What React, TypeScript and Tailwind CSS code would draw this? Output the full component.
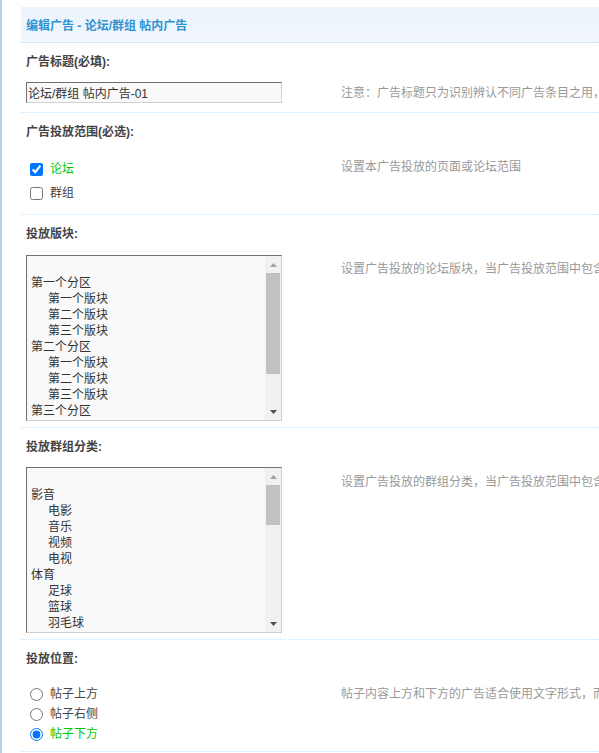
import type { ReactNode } from "react";

const FONT = "font-['Liberation_Sans','Noto_Sans_CJK_SC',sans-serif]";

type Opt = { text: string; child?: boolean };

const FORUMS: Opt[] = [
  { text: "" },
  { text: "第一个分区" },
  { text: "第一个版块", child: true },
  { text: "第二个版块", child: true },
  { text: "第三个版块", child: true },
  { text: "第二个分区" },
  { text: "第一个版块", child: true },
  { text: "第二个版块", child: true },
  { text: "第三个版块", child: true },
  { text: "第三个分区" },
];

const GROUPS: Opt[] = [
  { text: "" },
  { text: "影音" },
  { text: "电影", child: true },
  { text: "音乐", child: true },
  { text: "视频", child: true },
  { text: "电视", child: true },
  { text: "体育" },
  { text: "足球", child: true },
  { text: "篮球", child: true },
  { text: "羽毛球", child: true },
];

function ListBox({ options, thumb }: { options: Opt[]; thumb: number }) {
  return (
    <div className="flex h-[166px] w-[256px] border border-t-[#707070] border-l-[#707070] border-r-[#cfcfcf] border-b-[#cfcfcf] bg-[#f9f9f9]">
      <div className="flex-1 overflow-hidden pt-[3px] text-[12px] leading-[16px] text-[#333]">
        {options.map((o, i) => (
          <div key={i} className={`h-[16px] whitespace-nowrap ${o.child ? "pl-[21px]" : "pl-[4px]"}`}>
            {o.text}
          </div>
        ))}
      </div>
      <div className="flex w-[16px] shrink-0 flex-col bg-[#f1f1f1]">
        <div className="flex h-[17px] shrink-0 items-center justify-center">
          <svg width="7" height="4" viewBox="0 0 7 4">
            <polygon points="3.5,0 7,4 0,4" fill="#a3a3a3" />
          </svg>
        </div>
        <div className="mx-[1px] shrink-0 bg-[#c1c1c1]" style={{ height: thumb }} />
        <div className="flex-1" />
        <div className="flex h-[17px] shrink-0 items-center justify-center">
          <svg width="7" height="4" viewBox="0 0 7 4">
            <polygon points="0,0 7,0 3.5,4" fill="#505050" />
          </svg>
        </div>
      </div>
    </div>
  );
}

function Section({
  label,
  hint,
  hintPad,
  bodyClass,
  children,
}: {
  label: string;
  hint: string;
  hintPad: string;
  bodyClass: string;
  children: ReactNode;
}) {
  return (
    <div className="border-b border-dotted border-[#cfe3f2]">
      <div className="h-[39px] pl-[5px] pt-[11px] text-[12px] font-bold leading-[16px] text-[#444]">{label}</div>
      <div className="flex">
        <div className={`w-[320px] shrink-0 ${bodyClass}`}>{children}</div>
        <div className={`whitespace-nowrap text-[12px] leading-[16px] text-[#999] ${hintPad}`}>{hint}</div>
      </div>
    </div>
  );
}

function Choice({
  type,
  label,
  checked,
  h,
}: {
  type: "checkbox" | "radio";
  label: string;
  checked?: boolean;
  h: string;
}) {
  return (
    <label className={`flex items-center ${h}`}>
      <input
        type={type}
        name={type === "radio" ? "position" : undefined}
        defaultChecked={checked}
        className="m-0 ml-[9px] h-[13px] w-[13px]"
      />
      <span className={`ml-[7px] text-[12px] ${checked ? "text-[#00c800]" : "text-[#444]"}`}>{label}</span>
    </label>
  );
}

export default function App() {
  return (
    <div className={`h-[753px] w-[599px] overflow-hidden border-l-2 border-[#b7d1df] bg-white pl-[19px] pt-[7px] ${FONT}`}>
      <div className="w-[1000px]">
        <div className="h-[36px] border-b border-dotted border-[#c6ddef] bg-gradient-to-b from-[#ebf3fc] to-[#f2f7fd] pl-[5px] pt-[11px] text-[12px] font-bold leading-[16px] text-[#2e92d4]">
          编辑广告 - 论坛/群组 帖内广告
        </div>

        <Section
          label="广告标题(必填):"
          hint="注意：广告标题只为识别辨认不同广告条目之用，并不在广告中显示"
          hintPad="pt-[3px]"
          bodyClass="pl-[5px] pb-[9px]"
        >
          <input
            defaultValue="论坛/群组 帖内广告-01"
            className="block h-[21px] w-[256px] border border-t-[#707070] border-l-[#707070] border-r-[#cfcfcf] border-b-[#cfcfcf] bg-[#f9f9f9] px-[1px] text-[12px] text-[#333] outline-none"
          />
        </Section>

        <Section
          label="广告投放范围(必选):"
          hint="设置本广告投放的页面或论坛范围"
          hintPad="pt-[7px]"
          bodyClass="pt-[5px] pb-[9px]"
        >
          <Choice type="checkbox" label="论坛" checked h="h-[24px]" />
          <Choice type="checkbox" label="群组" h="h-[24px]" />
        </Section>

        <Section
          label="投放版块:"
          hint="设置广告投放的论坛版块，当广告投放范围中包含“论坛”时有效"
          hintPad="pt-[7px]"
          bodyClass="pl-[5px] pt-[1px] pb-[6px]"
        >
          <ListBox options={FORUMS} thumb={101} />
        </Section>

        <Section
          label="投放群组分类:"
          hint="设置广告投放的群组分类，当广告投放范围中包含“群组”时有效"
          hintPad="pt-[7px]"
          bodyClass="pl-[5px] pb-[6px]"
        >
          <ListBox options={GROUPS} thumb={40} />
        </Section>

        <Section
          label="投放位置:"
          hint="帖子内容上方和下方的广告适合使用文字形式，而帖子右侧的广告适合使用图片形式"
          hintPad="pt-[7px]"
          bodyClass="pt-[5px] pb-[7px]"
        >
          <Choice type="radio" label="帖子上方" h="h-[20px]" />
          <Choice type="radio" label="帖子右侧" h="h-[20px]" />
          <Choice type="radio" label="帖子下方" checked h="h-[20px]" />
        </Section>
      </div>
    </div>
  );
}
